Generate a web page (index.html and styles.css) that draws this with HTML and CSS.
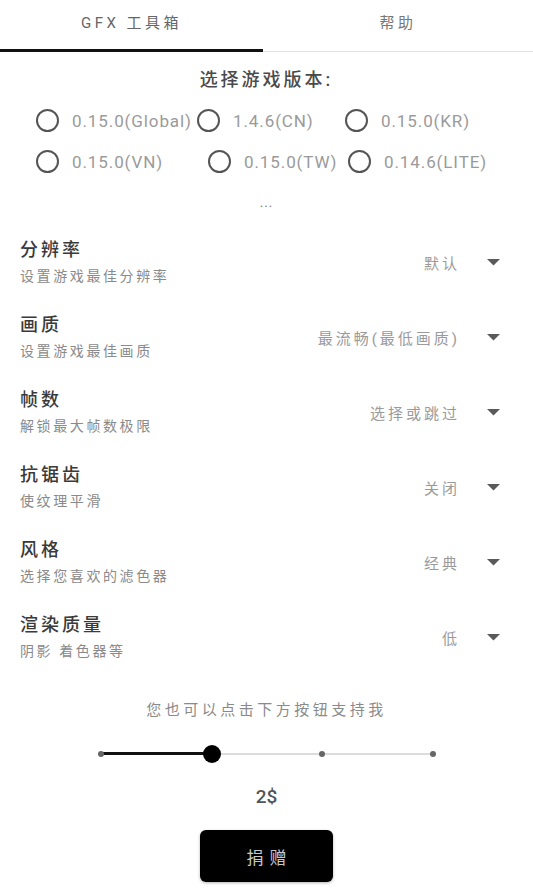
FILE: index.html
```html
<!DOCTYPE html>
<html lang="zh-CN">
<head>
    <meta charset="UTF-8">
    <meta name="viewport" content="width=device-width, initial-scale=1.0">
    <title>GFX 工具箱</title>
    <link rel="stylesheet" href="styles.css">
</head>
<body>

    <!-- Tabs -->
    <div class="tabs">
        <div class="tab tab-active">GFX 工具箱</div>
        <div class="tab">帮助</div>
    </div>

    <!-- Game version -->
    <div class="version">
        <div class="version-title">选择游戏版本:</div>
        <div class="radio-row radio-row-a">
            <label class="radio"><span class="radio-dot"></span>0.15.0(Global)</label>
            <label class="radio"><span class="radio-dot"></span>1.4.6(CN)</label>
            <label class="radio"><span class="radio-dot"></span>0.15.0(KR)</label>
        </div>
        <div class="radio-row radio-row-b">
            <label class="radio"><span class="radio-dot"></span>0.15.0(VN)</label>
            <label class="radio"><span class="radio-dot"></span>0.15.0(TW)</label>
            <label class="radio"><span class="radio-dot"></span>0.14.6(LITE)</label>
        </div>
        <div class="version-more">...</div>
    </div>

    <!-- Settings list -->
    <div class="settings">
        <div class="setting">
            <div class="setting-text">
                <div class="setting-title">分辨率</div>
                <div class="setting-desc">设置游戏最佳分辨率</div>
            </div>
            <div class="setting-value">默认</div>
            <svg class="setting-arrow" width="13" height="7" viewBox="0 0 13 7"><path d="M0 0h13L6.5 6.5z"/></svg>
        </div>
        <div class="setting">
            <div class="setting-text">
                <div class="setting-title">画质</div>
                <div class="setting-desc">设置游戏最佳画质</div>
            </div>
            <div class="setting-value">最流畅(最低画质)</div>
            <svg class="setting-arrow" width="13" height="7" viewBox="0 0 13 7"><path d="M0 0h13L6.5 6.5z"/></svg>
        </div>
        <div class="setting">
            <div class="setting-text">
                <div class="setting-title">帧数</div>
                <div class="setting-desc">解锁最大帧数极限</div>
            </div>
            <div class="setting-value">选择或跳过</div>
            <svg class="setting-arrow" width="13" height="7" viewBox="0 0 13 7"><path d="M0 0h13L6.5 6.5z"/></svg>
        </div>
        <div class="setting">
            <div class="setting-text">
                <div class="setting-title">抗锯齿</div>
                <div class="setting-desc">使纹理平滑</div>
            </div>
            <div class="setting-value">关闭</div>
            <svg class="setting-arrow" width="13" height="7" viewBox="0 0 13 7"><path d="M0 0h13L6.5 6.5z"/></svg>
        </div>
        <div class="setting">
            <div class="setting-text">
                <div class="setting-title">风格</div>
                <div class="setting-desc">选择您喜欢的滤色器</div>
            </div>
            <div class="setting-value">经典</div>
            <svg class="setting-arrow" width="13" height="7" viewBox="0 0 13 7"><path d="M0 0h13L6.5 6.5z"/></svg>
        </div>
        <div class="setting">
            <div class="setting-text">
                <div class="setting-title">渲染质量</div>
                <div class="setting-desc">阴影 着色器等</div>
            </div>
            <div class="setting-value">低</div>
            <svg class="setting-arrow" width="13" height="7" viewBox="0 0 13 7"><path d="M0 0h13L6.5 6.5z"/></svg>
        </div>
    </div>

    <!-- Donate -->
    <div class="support">
        <div class="support-text">您也可以点击下方按钮支持我</div>
        <div class="slider">
            <div class="slider-fill"></div>
            <span class="slider-tick tick-0"></span>
            <span class="slider-tick tick-2"></span>
            <span class="slider-tick tick-3"></span>
            <span class="slider-thumb"></span>
        </div>
        <div class="support-amount">2$</div>
        <button class="donate-btn">捐赠</button>
    </div>

</body>
</html>
```

FILE: styles.css
```css
/* Page basics */
* { box-sizing: border-box; margin: 0; padding: 0; }

body {
    width: 533px;
    min-height: 889px;
    background: #ffffff;
    font-family: Roboto, "Noto Sans CJK SC", sans-serif;
    color: #333;
}

/* Tabs on top */
.tabs {
    display: flex;
    height: 52px;
    border-bottom: 1px solid #e2e2e2;
}

.tab {
    flex: 1;
    display: flex;
    align-items: center;
    justify-content: center;
    padding-bottom: 8px;
    font-size: 15px;
    letter-spacing: 3.5px;
    color: #777;
}

.tab-active {
    flex: 0 0 263px;
    border-bottom: 3px solid #111;
    margin-bottom: -1px;
    padding-bottom: 6px;
    color: #666;
}

/* Version picker */
.version {
    padding-top: 14px;
    text-align: center;
}

.version-title {
    font-size: 18px;
    line-height: 28px;
    font-weight: 500;
    letter-spacing: 3px;
    color: #4a4a4a;
}

.radio-row {
    display: grid;
    height: 41px;
    padding-left: 36px;
    align-items: center;
    text-align: left;
}
.radio-row-a { margin-top: 6px; grid-template-columns: 161px 148px auto; }
.radio-row-b { grid-template-columns: 172px 140px auto; }

.radio {
    display: flex;
    align-items: center;
    font-size: 17px;
    letter-spacing: 0.9px;
    color: #9a9a9a;
    white-space: nowrap;
}

.radio-dot {
    width: 23px;
    height: 23px;
    margin-right: 13px;
    border: 2px solid #555;
    border-radius: 50%;
    flex-shrink: 0;
}

.version-more {
    margin-top: 11px;
    font-size: 13px;
    line-height: 20px;
    letter-spacing: 1px;
    color: #777;
}

/* Settings rows */
.settings {
    margin-top: 12px;
}

.setting {
    display: flex;
    align-items: center;
    padding: 11px 33px 12px 20px;
}

.setting-text {
    flex: 1;
}

.setting-title {
    font-size: 18px;
    line-height: 28px;
    font-weight: 500;
    letter-spacing: 3px;
    color: #3a3a3a;
}

.setting-desc {
    font-size: 14px;
    line-height: 24px;
    letter-spacing: 2.6px;
    color: #8a8a8a;
}

.setting-value {
    font-size: 15px;
    letter-spacing: 3px;
    color: #9a9a9a;
}

.setting-arrow {
    margin-left: 27px;
    fill: #5a5a5a;
}

/* Donate block */
.support {
    display: flex;
    flex-direction: column;
    align-items: center;
    margin-top: 24px;
}

.support-text {
    font-size: 15px;
    line-height: 22px;
    letter-spacing: 3.5px;
    color: #8a8a8a;
}

.slider {
    position: relative;
    width: 332px;
    height: 20px;
    margin-top: 23px;
}

.slider::before {
    content: "";
    position: absolute;
    left: 0;
    right: 0;
    top: 9px;
    height: 2px;
    background: #dcdcdc;
}

.slider-fill {
    position: absolute;
    left: 0;
    top: 8px;
    width: 111px;
    height: 3px;
    background: #111;
}

.slider-tick {
    position: absolute;
    top: 7px;
    width: 6px;
    height: 6px;
    margin-left: -3px;
    border-radius: 50%;
    background: #666;
}
.tick-0 { left: 0; }
.tick-2 { left: 221px; }
.tick-3 { left: 332px; }

.slider-thumb {
    position: absolute;
    left: 111px;
    top: 1px;
    width: 18px;
    height: 18px;
    margin-left: -9px;
    border-radius: 50%;
    background: #000;
}

.support-amount {
    margin-top: 21px;
    font-size: 19px;
    line-height: 24px;
    font-weight: 500;
    color: #555;
}

.donate-btn {
    width: 133px;
    height: 52px;
    margin-top: 21px;
    border: none;
    border-radius: 6px;
    background: #000;
    color: #c8c8c8;
    font-family: Roboto, "Noto Sans CJK SC", sans-serif;
    font-size: 17px;
    letter-spacing: 6px;
    padding-left: 6px;
    box-shadow: 0 1px 3px rgba(0, 0, 0, 0.3);
}
```
